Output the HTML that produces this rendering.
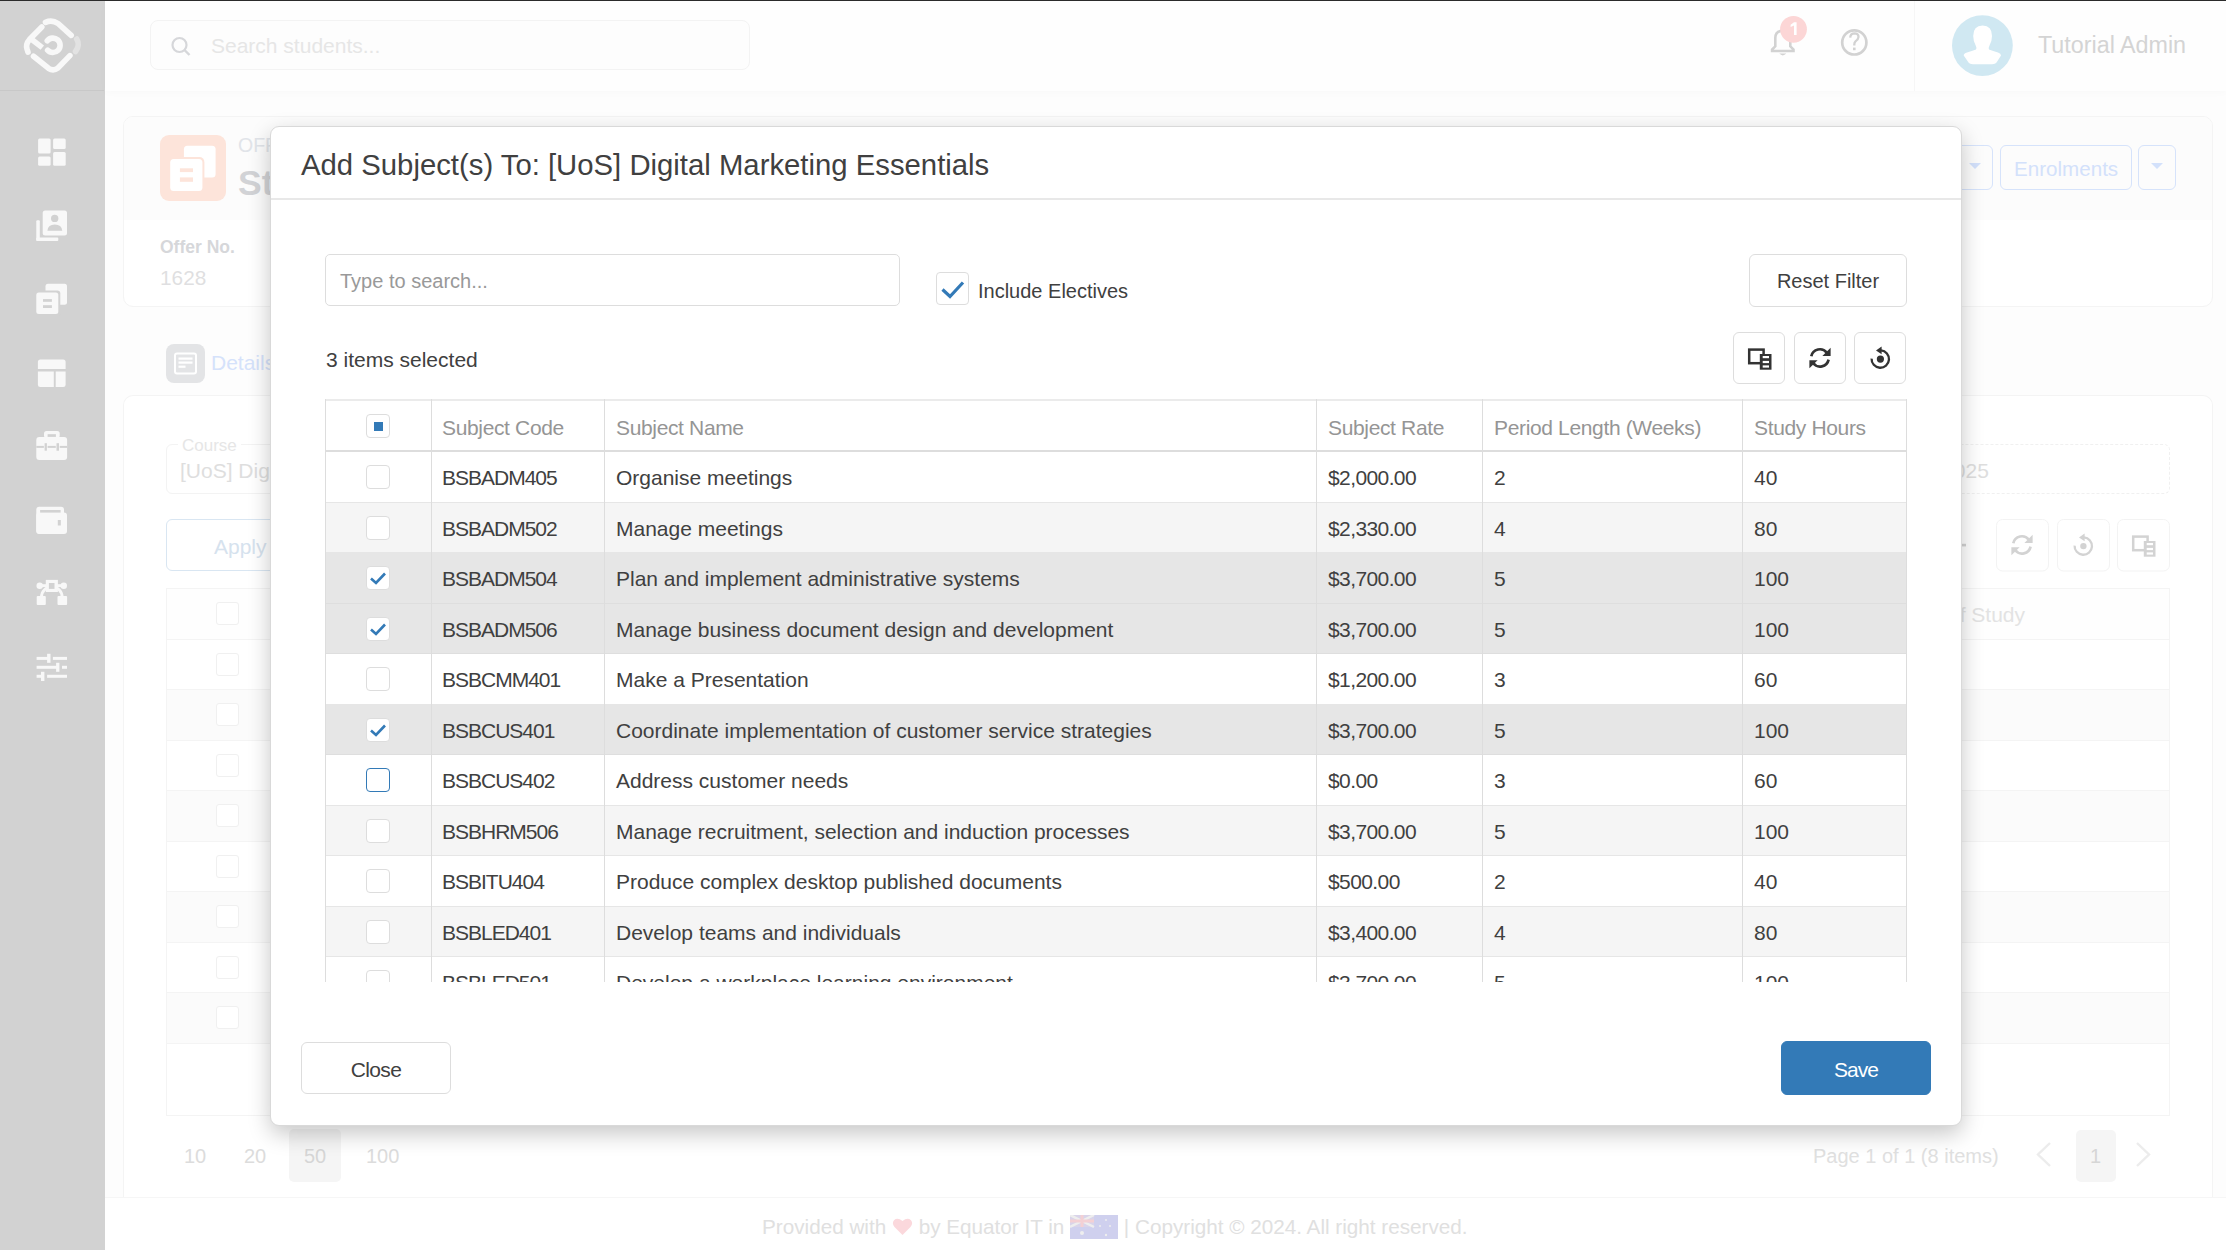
<!DOCTYPE html>
<html><head><meta charset="utf-8">
<style>
*{box-sizing:border-box;margin:0;padding:0}
html,body{width:2226px;height:1250px;overflow:hidden}
body{font-family:"Liberation Sans",sans-serif;background:#fdfdfd;position:relative;color:#333}
.abs{position:absolute}
#topline{left:0;top:0;width:2226px;height:1px;background:#2b2b2b;z-index:50}
#sidebar{left:0;top:0;width:105px;height:1250px;background:#d2d2d2}
#sidebar .sep{position:absolute;left:0;top:90px;width:104px;height:1px;background:#c8c8c8}
#header{left:105px;top:0;width:2121px;height:91px;background:#fefefe;box-shadow:0 2px 8px rgba(0,0,0,0.02)}
#modal{left:270px;top:126px;width:1692px;height:1000px;background:#fff;border:1px solid #d9d9d9;border-radius:9px;box-shadow:0 8px 22px rgba(0,0,0,0.22);z-index:20}
#mhead{left:0;top:0;width:1690px;height:73px;border-bottom:2px solid #e8e8e8}
.mt{font-size:29.3px;line-height:30px;white-space:nowrap;color:#404040}
.mtxt{font-size:21px;line-height:21px;white-space:nowrap;color:#404040}
#search{left:325px;top:254px;width:575px;height:52px;border:1px solid #ddd;border-radius:5px;z-index:21}
#search span{position:absolute;left:14px;top:16px;font-size:20px;line-height:21px;color:#999}
#incl{left:936px;top:271.5px;width:33px;height:33px;border:1px solid #ddd;border-radius:4px;z-index:21}
.btn{border:1px solid #ddd;border-radius:6px;background:#fff;z-index:21;text-align:center;color:#404040;font-size:21px}
#tbl{left:325px;top:399px;width:1582px;height:583px;overflow:hidden;z-index:21;border-left:1px solid #ddd;border-right:1px solid #ddd}
#thead{position:absolute;left:-1px;top:0;width:1582px;height:52.5px;border-top:2px solid #ebebeb;border-bottom:2px solid #ddd;background:#fff}
.row{position:absolute;left:-1px;width:1582px;height:50.5px;border-bottom:1px solid #e6e6e6}
.vl{position:absolute;top:0;width:1px;height:583px;background:#ddd}
.c,.h{position:absolute;top:0;font-size:21px;line-height:50.4px;padding-top:1.4px;white-space:nowrap;color:#404040}
.h{color:#959595;line-height:50px;padding-top:1.7px;letter-spacing:-0.35px}
.cb{position:absolute;left:41px;top:13px;width:24px;height:24px;border:1px solid #ddd;border-radius:4px;background:#fff}
.cb.hdr{top:12.7px}
.cb svg{position:absolute;left:-1px;top:-1px}
.cb.focus{border-color:#337ab7}
.ind{position:absolute;left:7px;top:7px;width:9px;height:9px;background:#337ab7}

.card{border:1px solid #f4f4f4;border-radius:10px;background:#fff}
.bgt{white-space:nowrap;line-height:1}
#header{z-index:2}

</style></head>
<body>
<div id="topline" class="abs"></div>
<div id="sidebar" class="abs"><div class="sep"></div>
<svg class="abs" style="left:0;top:0" width="105" height="700" viewBox="0 0 105 700">
 <g fill="#f8f8f8">
 <!-- logo -->
 <g fill="none" stroke="#f8f8f8" stroke-width="5.6" stroke-linecap="round">
  <path d="M45.5 22.4 Q52 19.5 58 23.5 L71.2 35.4"/>
  <path d="M41.8 27 L29.5 39.5 Q25.5 44 27 49 L28 52.2"/>
  <path d="M30.5 38.5 L42.3 47.6" stroke-linecap="butt"/>
  <path d="M47.3 40.8 A7.2 7.2 0 1 1 47.6 50.2"/>
  <path d="M33.5 56.2 L48.5 68.3 Q53.3 71.5 58 68 L69.9 55.6" stroke="#f9f9f9"/>
 </g>
 <path d="M76.7 39 Q80.5 45 75.5 51.5" fill="none" stroke="#e2e2e2" stroke-width="5.6" stroke-linecap="round"/>
 <!-- dashboard -->
 <rect x="38.1" y="138.5" width="12.5" height="15.1" rx="1.5"/>
 <rect x="53.1" y="138.5" width="12.6" height="10.4" rx="1.5"/>
 <rect x="38.1" y="156.6" width="12.5" height="9.1" rx="1.5"/>
 <rect x="53.1" y="151.9" width="12.6" height="13.8" rx="1.5"/>
 <!-- contacts -->
 <rect x="42.7" y="210.6" width="24.3" height="24.9" rx="2.5"/>
 <rect x="36.3" y="220.2" width="3.5" height="20.7" rx="1"/>
 <rect x="36.3" y="237.5" width="22" height="3.4" rx="1"/>
 <circle cx="54.7" cy="218.4" r="3.7" fill="#d2d2d2"/>
 <path d="M47.4 230.8 Q48 224.4 54.8 224.4 Q61.6 224.4 62.3 230.8 Z" fill="#d2d2d2"/>
 <!-- copy -->
 <rect x="45.5" y="283.7" width="21.5" height="21" rx="2.5"/>
 <rect x="34.3" y="290.4" width="26" height="25.5" rx="3" fill="#d2d2d2"/>
 <rect x="36.3" y="292.4" width="22" height="21.5" rx="2.5"/>
 <rect x="43" y="299.1" width="8.9" height="2.7" fill="#d2d2d2"/>
 <rect x="43" y="305.2" width="8.9" height="2.8" fill="#d2d2d2"/>
 <!-- layout -->
 <path d="M37.9 369.1 V362 Q37.9 359.5 40.4 359.5 H63.1 Q65.6 359.5 65.6 362 V369.1 Z"/>
 <path d="M37.9 371.4 H53.8 V387.1 H40.4 Q37.9 387.1 37.9 384.6 Z"/>
 <path d="M55.7 371.4 H65.6 V384.6 Q65.6 387.1 63.1 387.1 H55.7 Z"/>
 <!-- briefcase -->
 <rect x="36.3" y="436.9" width="30.8" height="23.2" rx="3"/>
 <rect x="44" y="430.9" width="15.7" height="7" rx="2.5"/>
 <rect x="47.6" y="434.2" width="8.3" height="2.7" fill="#d2d2d2"/>
 <rect x="36.3" y="445.9" width="30.8" height="2" fill="#d2d2d2"/>
 <rect x="43.9" y="442.3" width="3.7" height="9.3"/>
 <rect x="55.8" y="442.3" width="3.9" height="9.3"/>
 <rect x="44.6" y="443.2" width="2.3" height="7.5" fill="#d2d2d2"/>
 <rect x="56.5" y="443.2" width="2.5" height="7.5" fill="#d2d2d2"/>
 <!-- wallet -->
 <rect x="36.3" y="506.7" width="27.7" height="27" rx="3"/>
 <rect x="36.3" y="512.5" width="30.7" height="21.4" rx="3"/>
 <rect x="40.1" y="510" width="20.5" height="2.6" fill="#d2d2d2"/>
 <rect x="57.8" y="520" width="3" height="5.5" fill="#d2d2d2"/>
 <!-- vector -->
 <path d="M41.5 597 A10.3 10.3 0 0 1 62.1 597" fill="none" stroke="#f8f8f8" stroke-width="2.9"/>
 <circle cx="39.7" cy="585.7" r="3.2"/>
 <circle cx="63.8" cy="585.7" r="3.2"/>
 <rect x="39.7" y="584.2" width="24.1" height="2.9"/>
 <rect x="45.8" y="579.9" width="12.1" height="12.1"/>
 <rect x="48.9" y="583" width="5.6" height="5.9" fill="#d2d2d2"/>
 <rect x="36.7" y="595.9" width="9.1" height="9.2" rx="1"/>
 <rect x="57.5" y="595.9" width="9.6" height="9.2" rx="1"/>
 <!-- sliders -->
 <rect x="36.6" y="656.9" width="13" height="3"/><rect x="52.9" y="656.9" width="14.1" height="3"/>
 <rect x="47.1" y="653.8" width="3.4" height="9"/>
 <rect x="36.6" y="665.8" width="22" height="3"/><rect x="62" y="665.8" width="5" height="3"/>
 <rect x="56.1" y="662.8" width="3.3" height="9"/>
 <rect x="36.6" y="674.8" width="6" height="3"/><rect x="47.1" y="674.8" width="19.9" height="3"/>
 <rect x="41" y="671.8" width="3.4" height="9.2"/>
 </g>
</svg>
</div>
<div id="header" class="abs">
 <div class="abs" style="left:45px;top:20px;width:600px;height:50px;border:1px solid #f3f3f3;border-radius:8px;background:#fdfdfd"></div>
 <svg class="abs" style="left:65px;top:32px" width="30" height="30" viewBox="0 0 30 30"><circle cx="9.5" cy="13" r="7" fill="none" stroke="#d6d7da" stroke-width="2.2"/><path d="M14.5 18 L19.5 23" stroke="#d6d7da" stroke-width="2.4"/></svg>
 <div class="abs bgt" style="left:106px;top:35px;font-size:21px;color:#e6e6e6">Search students...</div>
 <div class="abs" style="left:1809px;top:0;width:1px;height:91px;background:#f6f6f6"></div>
 <svg class="abs" style="left:1660px;top:10px" width="60" height="60" viewBox="0 0 60 60">
  <path d="M7.1 41 L7.1 39.5 L10.3 36.3 L10.3 28 Q10.3 20.7 17.8 20.7 Q25.3 20.7 25.3 28 L25.3 36.3 L28.5 39.5 L28.5 41 Z" fill="none" stroke="#d2d2d2" stroke-width="2.6" stroke-linejoin="miter"/>
  <path d="M14.3 43.6 Q17.8 47.2 21.3 43.6 Z" fill="#d2d2d2"/>
  <circle cx="28.5" cy="19.3" r="13.4" fill="#fcd6d6"/>
  <path d="M29 12.3 L31.6 12.3 L31.6 25 L29 25 L29 15.6 L25.6 17 L25.6 14.8 Z" fill="#fff"/>
 </svg>
 <svg class="abs" style="left:1734px;top:14px" width="60" height="60" viewBox="0 0 60 60">
  <circle cx="15.3" cy="28.4" r="12.1" fill="none" stroke="#d2d2d2" stroke-width="2.7"/>
  <path d="M11.2 23.7 Q11.5 19.4 15.6 19.4 Q19.6 19.5 19.5 23 Q19.3 25.5 16.5 27.4 Q15.3 28.4 15.3 30.5 L15.3 31.5" fill="none" stroke="#d2d2d2" stroke-width="2.3"/>
  <rect x="14" y="33.6" width="2.6" height="2.6" fill="#d2d2d2"/>
 </svg>
 <svg class="abs" style="left:1847px;top:15px" width="62" height="62" viewBox="0 0 62 62">
  <circle cx="30.4" cy="30.6" r="30.4" fill="#d0e8f2"/>
  <path d="M30.6 10.5 Q40 10.5 40 21 Q40 26 37.5 30.5 Q36.2 33 37 34.5 Q41 36 46 37.5 Q49 38.5 49 40.5 L45.5 46 Q43.8 49.3 40 49.3 L21 49.3 Q17.2 49.3 15.5 46 L11.7 40.5 Q11.7 38.5 15 37.5 Q20 36 24 34.5 Q25 33 23.7 30.5 Q21.2 26 21.2 21 Q21.2 10.5 30.6 10.5 Z" fill="#fff"/>
 </svg>
 <div class="abs bgt" style="left:1933px;top:33.5px;font-size:23.3px;color:#d4d4d4">Tutorial Admin</div>
</div>
<!-- page bg cards -->
<div class="abs card" style="left:123px;top:115.5px;width:2090px;height:191px;overflow:hidden">
 <div class="abs" style="left:0;top:0;width:2090px;height:103px;background:#fcfcfc"></div>
</div>
<div class="abs" style="left:160px;top:135px;width:66px;height:66px;border-radius:9px;background:#fde4da"></div>
<svg class="abs" style="left:160px;top:135px" width="66" height="66" viewBox="0 0 66 66">
 <rect x="23.9" y="10.8" width="31.7" height="31.6" rx="3.5" fill="#fff"/>
 <rect x="8.2" y="22" width="36.2" height="36.1" rx="5" fill="#fde4da"/>
 <rect x="10.2" y="24" width="32.2" height="32.1" rx="3.5" fill="#fff"/>
 <rect x="19.9" y="33.3" width="13.1" height="3.8" fill="#fde4da"/>
 <rect x="19.9" y="42.4" width="13.1" height="4.4" fill="#fde4da"/>
</svg>
<div class="abs bgt" style="left:238px;top:136px;font-size:19.5px;color:#e1e4e9">OFFER</div>
<div class="abs bgt" style="left:238px;top:166px;font-size:35.5px;font-weight:bold;color:#d2d3d6">Student</div>
<div class="abs bgt" style="left:160px;top:239px;font-size:17.5px;font-weight:bold;color:#d6d7da">Offer No.</div>
<div class="abs bgt" style="left:160px;top:268px;font-size:20.8px;color:#dfdfe1">1628</div>
<div class="abs" style="left:1940px;top:145px;width:53px;height:45px;border:1.5px solid #d6e3fb;border-radius:6px"></div>
<div class="abs" style="left:2000px;top:145px;width:132px;height:45px;border:1.5px solid #d6e3fb;border-radius:6px"></div>
<div class="abs bgt" style="left:2014px;top:158.5px;font-size:20.6px;color:#d3e1fb">Enrolments</div>
<div class="abs" style="left:2138px;top:145px;width:38px;height:45px;border:1.5px solid #d6e3fb;border-radius:6px"></div>
<svg class="abs" style="left:1960px;top:160px" width="220" height="16" viewBox="0 0 220 16"><path d="M9 3 L21 3 L15 9 Z M191 3 L203 3 L197 9 Z" fill="#d3e1fb"/></svg>
<!-- tabs -->
<div class="abs" style="left:166px;top:343.5px;width:39px;height:39px;border-radius:8px;background:#e3e4e6"></div>
<svg class="abs" style="left:166px;top:343.5px" width="39" height="39" viewBox="0 0 39 39"><rect x="9" y="9.5" width="21" height="20" rx="2" fill="none" stroke="#fff" stroke-width="2"/><rect x="12.5" y="13.5" width="14" height="2.2" fill="#fff"/><rect x="12.5" y="17.5" width="14" height="2.2" fill="#fff"/><rect x="12.5" y="21.6" width="7" height="2.2" fill="#fff"/></svg>
<div class="abs bgt" style="left:211px;top:352px;font-size:21px;color:#d5e2fb">Details</div>
<div class="abs card" style="left:123px;top:395px;width:2090px;height:803px;border-radius:10px 10px 0 0;border-bottom:none"></div>
<div class="abs" style="left:166px;top:444px;width:400px;height:50px;border:1px solid #f3f3f3;border-radius:6px"></div>
<div class="abs bgt" style="left:178px;top:437px;font-size:17px;color:#e6e6e6;background:#fff;padding:0 4px">Course</div>
<div class="abs bgt" style="left:180px;top:460px;font-size:21px;color:#dedede">[UoS] Digital Marketing Essentials</div>
<div class="abs" style="left:166px;top:519px;width:300px;height:52px;border:1px solid #d9e6f2;border-radius:6px"></div>
<div class="abs bgt" style="left:214px;top:536px;font-size:21px;color:#d6e2ee">Apply</div>
<div class="abs" style="left:1700px;top:444px;width:470px;height:50px;border:1px dashed #f0f0f0;border-radius:6px"></div>
<div class="abs bgt" style="left:1913px;top:460px;font-size:21px;color:#dedede">01/2025</div>
<svg class="abs" style="left:1920px;top:519px" width="250" height="53" viewBox="0 0 250 53">
 <g fill="none" stroke="#f3f3f3" stroke-width="1"><rect x="-40" y="0.5" width="68" height="51.5" rx="6"/><rect x="76.5" y="0.5" width="52" height="51.5" rx="6"/><rect x="137.5" y="0.5" width="52" height="51.5" rx="6"/><rect x="197.5" y="0.5" width="52" height="51.5" rx="6"/></g>
 <g fill="#d3d3d3" stroke="none"><rect x="31" y="24.8" width="15" height="2.6"/><rect x="37.2" y="18.5" width="2.6" height="15"/></g>
 <g transform="translate(76,0)"><path d="M17.3 24.2 A8.7 8.7 0 0 1 32.8 20.8" fill="none" stroke="#d3d3d3" stroke-width="2.7"/><path d="M28.4 24 L36.6 24 L36.6 15.8 Z" fill="#d3d3d3"/><path d="M34.6 27.6 A8.7 8.7 0 0 1 19.1 31" fill="none" stroke="#d3d3d3" stroke-width="2.7"/><path d="M15.4 28.3 L23.6 28.3 L15.4 36.3 Z" fill="#d3d3d3"/></g>
 <g transform="translate(137,0)"><path d="M17.6 26.6 A8.7 8.7 0 1 0 27 18.4" fill="none" stroke="#d3d3d3" stroke-width="2.3"/><path d="M22 18.4 L27.6 14.6 L27.6 22.2 Z" fill="#d3d3d3"/><circle cx="26.4" cy="27.1" r="3.2" fill="#d3d3d3"/></g>
 <g transform="translate(197,0)"><rect x="16.2" y="17.6" width="14.4" height="13.6" fill="none" stroke="#d3d3d3" stroke-width="2.5"/><rect x="26.8" y="22" width="11.7" height="15.7" fill="#d3d3d3"/><rect x="29.7" y="24" width="6.3" height="2.2" fill="#fff"/><rect x="29.7" y="28.9" width="6.3" height="2.2" fill="#fff"/><rect x="29.7" y="33.4" width="6.3" height="2.2" fill="#fff"/></g>
</svg>
<!-- bg table -->
<div class="abs" style="left:166px;top:588px;width:2004px;height:528px;border:1px solid #f4f4f4">
 <div class="abs" style="left:0;top:0.0px;width:2002px;height:50.5px;border-bottom:1px solid #f4f4f4;background:#fefefe"><div class="abs" style="left:49px;top:13px;width:23px;height:23px;border:1px solid #f0f0f0;border-radius:3px;background:#fff"></div></div><div class="abs" style="left:0;top:50.5px;width:2002px;height:50.5px;border-bottom:1px solid #f4f4f4;background:transparent"><div class="abs" style="left:49px;top:13px;width:23px;height:23px;border:1px solid #f0f0f0;border-radius:3px;background:#fff"></div></div><div class="abs" style="left:0;top:101.0px;width:2002px;height:50.5px;border-bottom:1px solid #f4f4f4;background:#fbfbfb"><div class="abs" style="left:49px;top:13px;width:23px;height:23px;border:1px solid #f0f0f0;border-radius:3px;background:#fff"></div></div><div class="abs" style="left:0;top:151.5px;width:2002px;height:50.5px;border-bottom:1px solid #f4f4f4;background:transparent"><div class="abs" style="left:49px;top:13px;width:23px;height:23px;border:1px solid #f0f0f0;border-radius:3px;background:#fff"></div></div><div class="abs" style="left:0;top:202.0px;width:2002px;height:50.5px;border-bottom:1px solid #f4f4f4;background:#fbfbfb"><div class="abs" style="left:49px;top:13px;width:23px;height:23px;border:1px solid #f0f0f0;border-radius:3px;background:#fff"></div></div><div class="abs" style="left:0;top:252.5px;width:2002px;height:50.5px;border-bottom:1px solid #f4f4f4;background:transparent"><div class="abs" style="left:49px;top:13px;width:23px;height:23px;border:1px solid #f0f0f0;border-radius:3px;background:#fff"></div></div><div class="abs" style="left:0;top:303.0px;width:2002px;height:50.5px;border-bottom:1px solid #f4f4f4;background:#fbfbfb"><div class="abs" style="left:49px;top:13px;width:23px;height:23px;border:1px solid #f0f0f0;border-radius:3px;background:#fff"></div></div><div class="abs" style="left:0;top:353.5px;width:2002px;height:50.5px;border-bottom:1px solid #f4f4f4;background:transparent"><div class="abs" style="left:49px;top:13px;width:23px;height:23px;border:1px solid #f0f0f0;border-radius:3px;background:#fff"></div></div><div class="abs" style="left:0;top:404.0px;width:2002px;height:50.5px;border-bottom:1px solid #f4f4f4;background:#fbfbfb"><div class="abs" style="left:49px;top:13px;width:23px;height:23px;border:1px solid #f0f0f0;border-radius:3px;background:#fff"></div></div>
</div>
<div class="abs bgt" style="left:1948px;top:604px;font-size:21px;color:#e3e3e3">of Study</div>
<!-- pagination -->
<div class="abs bgt" style="left:184px;top:1146px;font-size:20px;color:#dcdcdc">10</div>
<div class="abs bgt" style="left:244px;top:1146px;font-size:20px;color:#dcdcdc">20</div>
<div class="abs" style="left:289px;top:1128.5px;width:52px;height:53px;border-radius:5px;background:#f5f5f5"></div>
<div class="abs bgt" style="left:304px;top:1146px;font-size:20px;color:#d6d6d6">50</div>
<div class="abs bgt" style="left:366px;top:1146px;font-size:20px;color:#dcdcdc">100</div>
<div class="abs bgt" style="left:1813px;top:1146px;font-size:20px;color:#e0e0e0">Page 1 of 1 (8 items)</div>
<svg class="abs" style="left:2030px;top:1140px" width="130" height="30" viewBox="0 0 130 30"><path d="M20 3 L8 14.5 L20 26 M107 3 L119 14.5 L107 26" fill="none" stroke="#ececec" stroke-width="2.4"/></svg>
<div class="abs" style="left:2076px;top:1129.5px;width:40px;height:52px;border-radius:5px;background:#f5f5f5"></div>
<div class="abs bgt" style="left:2090px;top:1146px;font-size:20px;color:#d6d6d6">1</div>
<!-- footer -->
<div class="abs" style="left:105px;top:1197px;width:2121px;height:53px;background:#fff;border-top:1px solid #f6f6f6"></div>
<div class="abs bgt" style="left:762px;top:1215px;font-size:20.7px;color:#e0e0e0;white-space:nowrap">Provided with <svg width="21" height="20" viewBox="0 0 21 20" style="vertical-align:-3px"><path d="M10.5 18 L2.5 10 Q-0.5 6.5 2 3.2 Q5.5 0 10.5 4 Q15.5 0 19 3.2 Q21.5 6.5 18.5 10 Z" fill="#fbd8dc"/></svg> by Equator IT in <svg width="48" height="24" viewBox="0 0 48 24" style="vertical-align:-5px"><rect width="48" height="24" fill="#cfd0ee"/><rect width="24" height="12" fill="#d9d4ea"/><path d="M0 0 L24 12 M24 0 L0 12" stroke="#eee" stroke-width="2.5"/><path d="M12 0 V12 M0 6 H24" stroke="#f3d0d4" stroke-width="3"/><circle cx="12" cy="18" r="2" fill="#eee"/><circle cx="36" cy="5" r="1" fill="#eee"/><circle cx="40" cy="11" r="1" fill="#eee"/><circle cx="36" cy="20" r="1.2" fill="#eee"/><circle cx="30" cy="11" r="1" fill="#eee"/></svg> | Copyright © 2024. All right reserved.</div>
<div id="modal" class="abs">
 <div id="mhead" class="abs"></div>
</div>
<div class="abs mt" style="left:301px;top:150px;z-index:21">Add Subject(s) To: [UoS] Digital Marketing Essentials</div>
<div id="search" class="abs"><span>Type to search...</span></div>
<div id="incl" class="abs"><svg width="33" height="33" viewBox="0 0 33 33" style="position:absolute;left:-1px;top:-1px"><polyline points="6.5,17.5 14,24.5 27,10.5" fill="none" stroke="#337ab7" stroke-width="3.2"/></svg></div>
<div class="abs mtxt" style="left:978px;top:281px;z-index:21;font-size:20px">Include Electives</div>
<div class="abs btn" style="left:1749px;top:254px;width:158px;height:53px;line-height:52px;font-size:20px">Reset Filter</div>
<div class="abs mtxt" style="left:326px;top:349px;z-index:21">3 items selected</div>
<div class="abs btn" style="left:1733px;top:332px;width:52px;height:52px"><svg width="52" height="52" viewBox="0 0 52 52" style="position:absolute;left:-1px;top:-1px"><rect x="16.2" y="17.6" width="14.4" height="13.6" fill="none" stroke="#333" stroke-width="2.5"/><rect x="26.8" y="22" width="11.7" height="15.7" fill="#333"/><rect x="29.7" y="24" width="6.3" height="2.2" fill="#fff"/><rect x="29.7" y="28.9" width="6.3" height="2.2" fill="#fff"/><rect x="29.7" y="33.4" width="6.3" height="2.2" fill="#fff"/></svg></div>
<div class="abs btn" style="left:1794px;top:332px;width:52px;height:52px"><svg width="52" height="52" viewBox="0 0 52 52" style="position:absolute;left:-1px;top:-1px"><path d="M17.3 24.2 A8.7 8.7 0 0 1 32.8 20.8" fill="none" stroke="#333" stroke-width="2.7"/><path d="M28.4 24 L36.6 24 L36.6 15.8 Z" fill="#333"/><path d="M34.6 27.6 A8.7 8.7 0 0 1 19.1 31" fill="none" stroke="#333" stroke-width="2.7"/><path d="M15.4 28.3 L23.6 28.3 L15.4 36.3 Z" fill="#333"/></svg></div>
<div class="abs btn" style="left:1854px;top:332px;width:52px;height:52px"><svg width="52" height="52" viewBox="0 0 52 52" style="position:absolute;left:-1px;top:-1px"><path d="M17.6 26.6 A8.7 8.7 0 1 0 27 18.4" fill="none" stroke="#333" stroke-width="2.3"/><path d="M22 18.4 L27.6 14.6 L27.6 22.2 Z" fill="#333"/><circle cx="26.4" cy="27.1" r="3.6" fill="#333"/></svg></div>
<div id="tbl" class="abs"><div id="thead"><div class="cb hdr"><div class="ind"></div></div><span class="h" style="left:117px">Subject Code</span><span class="h" style="left:291px">Subject Name</span><span class="h" style="left:1003px">Subject Rate</span><span class="h" style="left:1169px">Period Length (Weeks)</span><span class="h" style="left:1429px">Study Hours</span></div><div class="row" style="top:53.0px;background:#fff"><div class="cb"></div><span class="c" style="left:117px;letter-spacing:-1px">BSBADM405</span><span class="c" style="left:291px">Organise meetings</span><span class="c" style="left:1003px;letter-spacing:-0.6px">$2,000.00</span><span class="c" style="left:1169px">2</span><span class="c" style="left:1429px">40</span></div><div class="row" style="top:103.5px;background:#f5f5f5"><div class="cb"></div><span class="c" style="left:117px;letter-spacing:-1px">BSBADM502</span><span class="c" style="left:291px">Manage meetings</span><span class="c" style="left:1003px;letter-spacing:-0.6px">$2,330.00</span><span class="c" style="left:1169px">4</span><span class="c" style="left:1429px">80</span></div><div class="row" style="top:154.0px;background:#e6e6e6;border-bottom-color:#dedede"><div class="cb sel"><svg width="24" height="24" viewBox="0 0 24 24"><polyline points="5,12.5 10,17 19,7.5" fill="none" stroke="#337ab7" stroke-width="2.6"/></svg></div><span class="c" style="left:117px;letter-spacing:-1px">BSBADM504</span><span class="c" style="left:291px">Plan and implement administrative systems</span><span class="c" style="left:1003px;letter-spacing:-0.6px">$3,700.00</span><span class="c" style="left:1169px">5</span><span class="c" style="left:1429px">100</span></div><div class="row" style="top:204.5px;background:#e6e6e6;border-bottom-color:#dedede"><div class="cb sel"><svg width="24" height="24" viewBox="0 0 24 24"><polyline points="5,12.5 10,17 19,7.5" fill="none" stroke="#337ab7" stroke-width="2.6"/></svg></div><span class="c" style="left:117px;letter-spacing:-1px">BSBADM506</span><span class="c" style="left:291px">Manage business document design and development</span><span class="c" style="left:1003px;letter-spacing:-0.6px">$3,700.00</span><span class="c" style="left:1169px">5</span><span class="c" style="left:1429px">100</span></div><div class="row" style="top:255.0px;background:#fff"><div class="cb"></div><span class="c" style="left:117px;letter-spacing:-1px">BSBCMM401</span><span class="c" style="left:291px">Make a Presentation</span><span class="c" style="left:1003px;letter-spacing:-0.6px">$1,200.00</span><span class="c" style="left:1169px">3</span><span class="c" style="left:1429px">60</span></div><div class="row" style="top:305.5px;background:#e6e6e6;border-bottom-color:#dedede"><div class="cb sel"><svg width="24" height="24" viewBox="0 0 24 24"><polyline points="5,12.5 10,17 19,7.5" fill="none" stroke="#337ab7" stroke-width="2.6"/></svg></div><span class="c" style="left:117px;letter-spacing:-1px">BSBCUS401</span><span class="c" style="left:291px">Coordinate implementation of customer service strategies</span><span class="c" style="left:1003px;letter-spacing:-0.6px">$3,700.00</span><span class="c" style="left:1169px">5</span><span class="c" style="left:1429px">100</span></div><div class="row" style="top:356.0px;background:#fff"><div class="cb focus"></div><span class="c" style="left:117px;letter-spacing:-1px">BSBCUS402</span><span class="c" style="left:291px">Address customer needs</span><span class="c" style="left:1003px;letter-spacing:-0.6px">$0.00</span><span class="c" style="left:1169px">3</span><span class="c" style="left:1429px">60</span></div><div class="row" style="top:406.5px;background:#f5f5f5"><div class="cb"></div><span class="c" style="left:117px;letter-spacing:-1px">BSBHRM506</span><span class="c" style="left:291px">Manage recruitment, selection and induction processes</span><span class="c" style="left:1003px;letter-spacing:-0.6px">$3,700.00</span><span class="c" style="left:1169px">5</span><span class="c" style="left:1429px">100</span></div><div class="row" style="top:457.0px;background:#fff"><div class="cb"></div><span class="c" style="left:117px;letter-spacing:-1px">BSBITU404</span><span class="c" style="left:291px">Produce complex desktop published documents</span><span class="c" style="left:1003px;letter-spacing:-0.6px">$500.00</span><span class="c" style="left:1169px">2</span><span class="c" style="left:1429px">40</span></div><div class="row" style="top:507.5px;background:#f5f5f5"><div class="cb"></div><span class="c" style="left:117px;letter-spacing:-1px">BSBLED401</span><span class="c" style="left:291px">Develop teams and individuals</span><span class="c" style="left:1003px;letter-spacing:-0.6px">$3,400.00</span><span class="c" style="left:1169px">4</span><span class="c" style="left:1429px">80</span></div><div class="row" style="top:558.0px;background:#fff"><div class="cb"></div><span class="c" style="left:117px;letter-spacing:-1px">BSBLED501</span><span class="c" style="left:291px">Develop a workplace learning environment</span><span class="c" style="left:1003px;letter-spacing:-0.6px">$3,700.00</span><span class="c" style="left:1169px">5</span><span class="c" style="left:1429px">100</span></div><div class="vl" style="left:105px"></div><div class="vl" style="left:278px"></div><div class="vl" style="left:990px"></div><div class="vl" style="left:1156px"></div><div class="vl" style="left:1416px"></div></div>
<div class="abs btn" style="left:301px;top:1042px;width:150px;height:52px;line-height:53px;letter-spacing:-0.6px">Close</div>
<div class="abs btn" style="left:1781px;top:1041px;width:150px;height:54px;line-height:56px;letter-spacing:-1px;background:#337ab7;border-color:#337ab7;color:#fff">Save</div>

</body></html>
